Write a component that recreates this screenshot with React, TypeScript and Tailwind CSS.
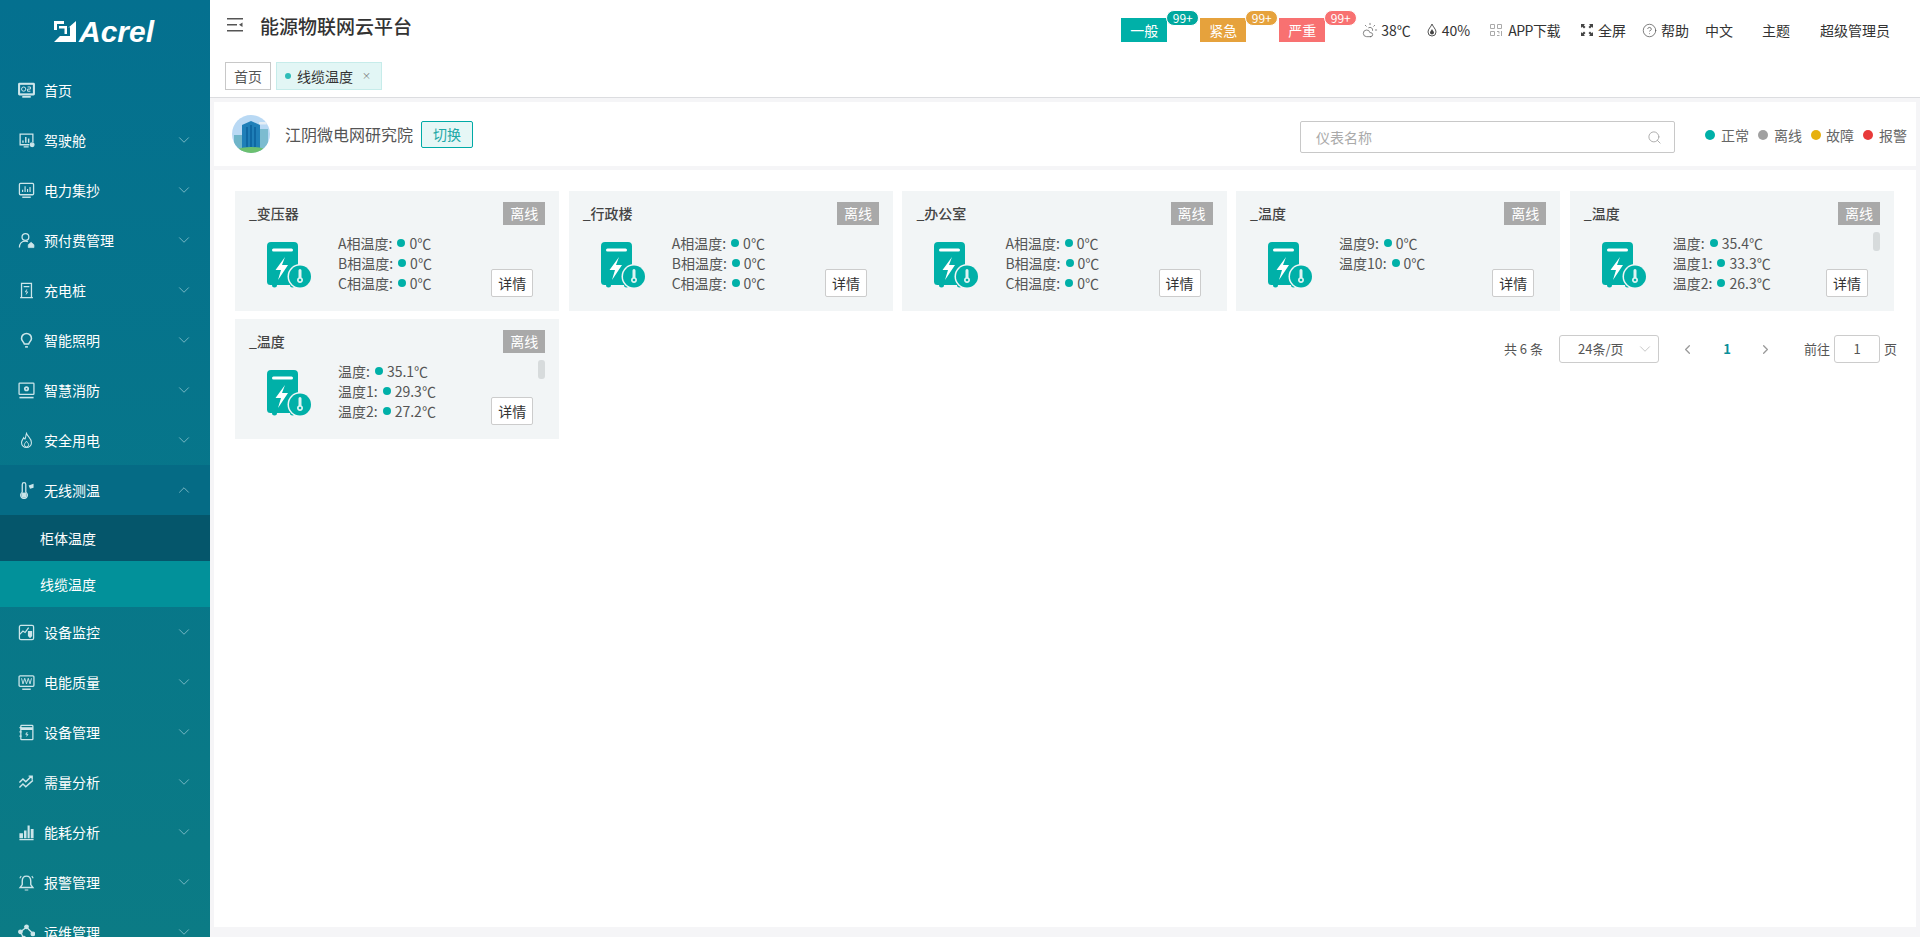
import { ChevronDown, ChevronUp, ChevronLeft, ChevronRight, Search, CircleHelp, CloudSun } from 'lucide-react';
import type { ReactNode } from 'react';

const ic = 'w-[17px] h-[17px] shrink-0 text-[#cde6ea]';

function Svg({ children }: { children: ReactNode }) {
  return (
    <svg viewBox="0 0 24 24" fill="none" stroke="currentColor" strokeWidth="1.8" className={ic}>
      {children}
    </svg>
  );
}

const icons: Record<string, ReactNode> = {
  home: (
    <Svg>
      <rect x="1" y="2" width="22" height="16" rx="1" fill="currentColor" />
      <rect x="3" y="4" width="18" height="12" fill="#04708f" stroke="none" />
      <circle cx="8" cy="10" r="3" strokeWidth="1.4" />
      <path d="M13.500 7h4v3h-4v3h4" strokeWidth="1.400" />
      <path d="M6 21h12" strokeWidth="2.400" />
    </Svg>
  ),
  cockpit: (
    <Svg>
      <path d="M16 18H3V3h18v11" />
      <path d="M7 15v-3M11 15V7M15 15V9M8 21h7" strokeWidth="2" />
      <circle cx="20" cy="18" r="2.600" fill="currentColor" />
    </Svg>
  ),
  meter: (
    <Svg>
      <rect x="2" y="2" width="20" height="16" rx="1.500" />
      <path d="M6.500 14v-3M10 14V6M13.500 14v-4M17 14V7" strokeWidth="1.600" />
      <path d="M6 21.500h12" strokeWidth="2" />
    </Svg>
  ),
  prepay: (
    <Svg>
      <circle cx="10.500" cy="7" r="4.800" />
      <path d="M2 22c0-5.500 3-9 8.500-9 1.500 0 2.500.3 3.500.8" />
      <path d="M14.500 18l4-3.500 4 3.500v4h-8Z" fill="currentColor" strokeWidth="1" />
    </Svg>
  ),
  charger: (
    <Svg>
      <path d="M5 21V2h14v19M3 22h18M8 6.500h8" />
      <path d="M12.500 10.500l-2 3.500h3l-2 3.500" strokeWidth="1.400" />
    </Svg>
  ),
  light: (
    <Svg>
      <path d="M12 2a7 7 0 0 1 7 7c0 3-3 5-4 8H9c-1-3-4-5-4-8a7 7 0 0 1 7-7Z" strokeWidth="2.200" />
      <path d="M10 21h4" strokeWidth="2.200" />
    </Svg>
  ),
  fire: (
    <Svg>
      <rect x="1.500" y="1.500" width="21" height="16" rx="1" />
      <circle cx="12" cy="9.500" r="3.600" fill="currentColor" stroke="none" />
      <circle cx="12" cy="9.500" r="1.200" fill="#04708f" stroke="none" />
      <path d="M2 22h20" strokeWidth="2.200" />
    </Svg>
  ),
  safe: (
    <Svg>
      <path d="M12 2c1 4 7 7 7 13a7 7 0 0 1-14 0c0-3 2-5 3-7 1 2 2 2 2 2 1-3 1-5 2-8Z" strokeWidth="1.500" />
      <path d="M12 13c1 2 3 3 3 5a3 3 0 0 1-6 0c0-2 2-3 3-5Z" strokeWidth="1.300" />
    </Svg>
  ),
  thermo: (
    <svg viewBox="0 0 24 24" fill="none" stroke="currentColor" strokeWidth="1.800" className={ic}>
      <path d="M6 14.500V3.500a2.500 2.500 0 0 1 5 0v11a4.700 4.700 0 1 1-5 0Z" />
      <circle cx="8.500" cy="18.500" r="2.800" fill="currentColor" />
      <path d="M15 5l7-2.500v5.500l-5 1.500Z" fill="currentColor" stroke="none" />
    </svg>
  ),
  monitor: (
    <Svg>
      <rect x="2" y="2" width="20" height="20" rx="2" />
      <path d="M2 15l5-5 3 2 5-7" />
      <path d="M14 10h6v7l-3 3-3-3Z" fill="currentColor" stroke="none" />
    </Svg>
  ),
  quality: (
    <Svg>
      <rect x="1.500" y="2.500" width="21" height="15" rx="1.500" />
      <path d="M5 6l2 8 2.500-8 2.500 8 2.500-8 2.500 8 2-8" strokeWidth="1.300" />
      <path d="M6 21.500h12" strokeWidth="2" />
    </Svg>
  ),
  device: (
    <Svg>
      <rect x="4" y="2" width="17" height="20" rx="1" />
      <path d="M4 6.500h17" strokeWidth="4" />
      <path d="M2 5h3M2 11h3M2 17h3" />
      <path d="M13 11.500l-2 3h3l-2 3" strokeWidth="1.400" />
    </Svg>
  ),
  demand: (
    <Svg>
      <path d="M2 12l5-5 4 4 8-8M15 3h5v5M2 19l5-5 4 4 10-9" strokeWidth="2" />
    </Svg>
  ),
  energy: (
    <svg viewBox="0 0 24 24" fill="currentColor" className={ic}>
      <path d="M2 21h20v2H2ZM2 13h5v7H2ZM8.500 9h3.500v11H8.500ZM13.500 2h3v18h-3ZM18 7h4v13h-4Z" />
    </svg>
  ),
  alarm: (
    <Svg>
      <path d="M12 3c-4 0-6 3-6 7v5l-3 4h18l-3-4v-5c0-4-2-7-6-7Z" strokeWidth="2" />
      <path d="M9.500 22.500h5M2.500 6l2-3M21.500 6l-2-3" strokeWidth="1.500" />
    </Svg>
  ),
  ops: (
    <Svg>
      <circle cx="3.500" cy="11" r="2.500" fill="currentColor" />
      <circle cx="12" cy="4" r="2.500" fill="currentColor" />
      <circle cx="21" cy="14" r="2.500" fill="currentColor" />
      <circle cx="8" cy="20" r="2.500" fill="currentColor" />
      <path d="M5.500 9.500l5-4M13.500 6l6 6M4.500 13l2.500 5" />
    </Svg>
  ),
};

const menuTop = [
  ['首页', 'home'],
  ['驾驶舱', 'cockpit'],
  ['电力集抄', 'meter'],
  ['预付费管理', 'prepay'],
  ['充电桩', 'charger'],
  ['智能照明', 'light'],
  ['智慧消防', 'fire'],
  ['安全用电', 'safe'],
];

const menuBottom = [
  ['设备监控', 'monitor'],
  ['电能质量', 'quality'],
  ['设备管理', 'device'],
  ['需量分析', 'demand'],
  ['能耗分析', 'energy'],
  ['报警管理', 'alarm'],
  ['运维管理', 'ops'],
];

function MenuItem({ label, icon, open, noArrow }: { label: string; icon: string; open?: boolean; noArrow?: boolean }) {
  return (
    <div className={`h-[50px] shrink-0 flex items-center pl-[18px] pr-[17px] text-[14px] text-white ${open ? 'bg-[#056b85]' : ''}`}>
      <span className="w-[26px] flex">{icons[icon]}</span>
      <span className="flex-1">{label}</span>
      {!noArrow &&
        (open ? (
          <ChevronUp className="w-[18px] h-[18px] text-[#8cc4cf]" strokeWidth={1.1} />
        ) : (
          <ChevronDown className="w-[18px] h-[18px] text-[#8cc4cf]" strokeWidth={1.1} />
        ))}
    </div>
  );
}

function Sidebar() {
  return (
    <aside className="w-[210px] h-full shrink-0 overflow-hidden flex flex-col bg-gradient-to-b from-[#04708f] to-[#0b7b85]">
      <div className="h-[65px] shrink-0 flex items-start pt-[20px] pl-[54px]">
        <svg viewBox="0 0 22 22" className="w-[22px] h-[22px]" fill="#fff">
          <path d="M0 1h10v3H3v6H0Z" />
          <path d="M5 6h8v8h-2.500V8.500H5Z" />
          <path d="M14 8 22 1v21H0l6-6h10V7Z" />
        </svg>
        <span className="ml-[3px] text-[30px] leading-[23px] font-bold italic text-white font-['Liberation_Sans',sans-serif]">Acrel</span>
      </div>
      {menuTop.map(([label, icon], i) => (
        <MenuItem key={label} label={label} icon={icon} noArrow={i === 0} />
      ))}
      <MenuItem label="无线测温" icon="thermo" open />
      <div className="h-[46px] shrink-0 bg-[#05566b] flex items-center pl-[40px] text-[14px] text-white">柜体温度</div>
      <div className="h-[46px] shrink-0 bg-[#02919a] flex items-center pl-[40px] text-[14px] text-white">线缆温度</div>
      {menuBottom.map(([label, icon]) => (
        <MenuItem key={label} label={label} icon={icon} />
      ))}
    </aside>
  );
}

function Alarm({ label, bg, badge, ml }: { label: string; bg: string; badge: string; ml: string }) {
  return (
    <div className={`relative w-[46px] h-[24px] mt-[18px] flex items-center justify-center text-[14px] text-white ${bg} ${ml}`}>
      {label}
      <span className={`absolute -top-[8px] left-[45px] w-[33px] h-[16px] rounded-[8px] border border-white flex items-center justify-center text-[12px] leading-none ${badge}`}>
        99+
      </span>
    </div>
  );
}

function Header() {
  return (
    <div className="h-[50px] shrink-0 flex items-start bg-white">
      <svg viewBox="0 0 16 14" className="w-[16px] h-[14px] ml-[17px] mt-[18px]" fill="#555">
        <path d="M0 0h16v1.500H0ZM0 6h10v1.500H0ZM0 12h16v1.500H0ZM12 6.700 15.500 4.500v4.500Z" />
      </svg>
      <h1 className="ml-[17px] mt-[12px] text-[19px] leading-[28px] font-medium text-[#333]">能源物联网云平台</h1>
      <div className="ml-auto flex items-start pr-[30px] text-[14px] text-[#333]">
        <Alarm label="一般" bg="bg-[#00b0a8]" badge="bg-[#00a89e]" ml="" />
        <Alarm label="紧急" bg="bg-[#e6a23c]" badge="bg-[#e6a23c]" ml="ml-[33px]" />
        <Alarm label="严重" bg="bg-[#f87171]" badge="bg-[#f87171]" ml="ml-[33px]" />
        <div className="ml-[37px] mt-[20px] flex items-center leading-[20px]">
          <CloudSun className="w-[16px] h-[16px] text-[#666]" strokeWidth={1.2} />
          <span className="ml-[3px]">38℃</span>
          <svg viewBox="0 0 10 14" className="ml-[16px] w-[10px] h-[14px]" fill="none" stroke="#555">
            <path d="M5 1C4 4 1 6 1 9a4 4 0 0 0 8 0C9 6 6 4 5 1Z" />
            <path d="M5 6c-.6 1.500-2 2.500-2 3.500a2 2 0 0 0 4 0C7 8.500 5.600 7.500 5 6Z" fill="#444" stroke="none" />
          </svg>
          <span className="ml-[5px]">40%</span>
          <svg viewBox="0 0 12 12" className="ml-[20px] w-[12px] h-[12px]" fill="none" stroke="#aaa">
            <path d="M.5.500h4v4h-4ZM7.500.500h4v4h-4ZM.5 7.500h4v4h-4ZM7 7.500h2v2M11.500 7v5M7 11.500h2.500" />
          </svg>
          <span className="ml-[6px] tracking-[-0.5px]">APP下载</span>
          <svg viewBox="0 0 12 12" className="ml-[21px] w-[12px] h-[12px]" fill="#444">
            <path d="M0 0h4L2.800 1.200 4.500 3 3 4.500 1.200 2.800 0 4ZM12 0v4l-1.200-1.200L9 4.500 7.500 3l1.700-1.800L8 0ZM0 12V8l1.200 1.200L3 7.500 4.500 9l-1.700 1.800L4 12ZM12 12H8l1.200-1.200L7.500 9 9 7.500l1.800 1.700L12 8Z" />
          </svg>
          <span className="ml-[5px]">全屏</span>
          <CircleHelp className="ml-[16px] w-[15px] h-[15px] text-[#555]" strokeWidth={1.2} />
          <span className="ml-[4px]">帮助</span>
          <span className="ml-[16px]">中文</span>
          <span className="ml-[29px]">主题</span>
          <span className="ml-[30px]">超级管理员</span>
        </div>
      </div>
    </div>
  );
}

function Tabs() {
  return (
    <div className="h-[48px] shrink-0 bg-white border-b border-[#dcdde0] flex items-start pt-[12px] pl-[15px] text-[14px]">
      <div className="w-[46px] h-[28px] border border-[#c8c8c8] flex items-center justify-center text-[#555]">首页</div>
      <div className="ml-[5px] w-[106px] h-[28px] bg-[#e2f6f5] border border-[#c6ecea] flex items-center pl-[8px] text-[#333]">
        <span className="w-[6px] h-[6px] rounded-full bg-[#2fbdb8]" />
        <span className="ml-[6px]">线缆温度</span>
        <span className="ml-[9px] text-[9px] text-[#777]">×</span>
      </div>
    </div>
  );
}

function Avatar() {
  return (
    <svg viewBox="0 0 38 38" className="w-[38px] h-[38px] shrink-0">
      <defs>
        <clipPath id="av">
          <circle cx="19" cy="19" r="19" />
        </clipPath>
      </defs>
      <g clipPath="url(#av)">
        <rect width="38" height="38" fill="#b9d9f4" />
        <rect x="27" y="7" width="8" height="2.500" rx="1" fill="#e6eef5" />
        <rect x="2" y="20" width="9" height="16" fill="#6fb5c9" />
        <rect x="27" y="14" width="9" height="22" fill="#7cbcd0" />
        <path d="M10 10l9-4 9 4v24H10Z" fill="#1f7fb8" />
        <path d="M14 12h2v20h-2ZM18 10h2v22h-2ZM22 12h2v20h-2Z" fill="#0f68a3" />
        <ellipse cx="19" cy="38" rx="19" ry="6" fill="#6cc070" />
      </g>
    </svg>
  );
}

function CardIcon() {
  return (
    <svg viewBox="0 0 46 46" className="w-[46px] h-[46px] shrink-0">
      <path d="M4 0h23a4 4 0 0 1 4 4v39h-3a2.500 2.500 0 0 1-5 0H10a2.500 2.500 0 0 1-5 0H3.500A3.500 3.500 0 0 1 0 39.500V4a4 4 0 0 1 4-4Z" fill="#00b0a8" />
      <rect x="5" y="6.500" width="21" height="3" rx="1.500" fill="#fff" />
      <path d="M18 15 8.500 28h5.500L11 38l10-15h-6l3-8Z" fill="#fff" />
      <circle cx="33" cy="34.500" r="12.500" fill="#f2f5f6" />
      <circle cx="33" cy="34.500" r="11" fill="#00b0a8" />
      <path d="M31.500 28.500a1.500 1.500 0 0 1 3 0v7a3 3 0 1 1-3 0Z" fill="#dff4f3" />
      <circle cx="33" cy="38" r="1.300" fill="#00b0a8" />
    </svg>
  );
}

const cards = [
  { title: '_变压器', rows: [['A相温度', '0℃'], ['B相温度', '0℃'], ['C相温度', '0℃']] },
  { title: '_行政楼', rows: [['A相温度', '0℃'], ['B相温度', '0℃'], ['C相温度', '0℃']] },
  { title: '_办公室', rows: [['A相温度', '0℃'], ['B相温度', '0℃'], ['C相温度', '0℃']] },
  { title: '_温度', rows: [['温度9', '0℃'], ['温度10', '0℃']] },
  { title: '_温度', rows: [['温度', '35.4℃'], ['温度1', '33.3℃'], ['温度2', '26.3℃']], scroll: true },
  { title: '_温度', rows: [['温度', '35.1℃'], ['温度1', '29.3℃'], ['温度2', '27.2℃']], scroll: true },
];

function Card({ title, rows, scroll }: { title: string; rows: string[][]; scroll?: boolean }) {
  return (
    <div className="relative h-[120px] bg-[#f2f5f6] pl-[14px] pr-[14px] pt-[11px]">
      <div className="flex items-center justify-between">
        <span className="text-[14px] leading-[23px] font-medium text-[#444]">{title}</span>
        <span className="w-[42px] h-[23px] bg-[#a9a9a9] text-white text-[14px] flex items-center justify-center">离线</span>
      </div>
      <div className="flex pl-[18px] mt-[17px]">
        <CardIcon />
        <div className="ml-[25px] -mt-[9px] text-[14px] leading-[20px] text-[#555]">
          {rows.map(([k, v]) => (
            <div key={k} className="flex items-center whitespace-nowrap">
              {k}:
              <span className="ml-[5px] mr-[4px] w-[8px] h-[8px] shrink-0 rounded-full bg-[#00b0a8]" />
              {v}
            </div>
          ))}
        </div>
      </div>
      {scroll && <span className="absolute right-[14px] top-[41px] w-[7px] h-[19px] rounded-[3px] bg-[#d7dbdc]" />}
      <button className="absolute right-[26px] top-[78px] w-[42px] h-[28px] bg-white border border-[#ccc] rounded-[2px] text-[14px] text-[#333]">详情</button>
    </div>
  );
}

function Pager() {
  return (
    <div className="col-span-4 flex justify-end items-start pt-[16px] -mr-[3px] text-[13px] text-[#555]">
      <span className="leading-[28px]">共 6 条</span>
      <div className="ml-[16px] w-[100px] h-[28px] border border-[#ccc] rounded-[3px] flex items-center pl-[18px] pr-[4px]">
        <span className="flex-1">24条/页</span>
        <ChevronDown className="w-[18px] h-[18px] text-[#bbb]" strokeWidth={1.1} />
      </div>
      <div className="w-[38px] ml-[10px] h-[28px] flex items-center justify-center">
        <ChevronLeft className="w-[15px] h-[15px] text-[#999]" />
      </div>
      <span className="w-[40px] text-center leading-[28px] font-bold text-[#0a8f99]">1</span>
      <div className="w-[38px] h-[28px] flex items-center justify-center">
        <ChevronRight className="w-[15px] h-[15px] text-[#999]" />
      </div>
      <span className="ml-[19px] leading-[28px]">前往</span>
      <div className="ml-[4px] w-[46px] h-[28px] border border-[#ccc] rounded-[3px] flex items-center justify-center">1</div>
      <span className="ml-[4px] leading-[28px]">页</span>
    </div>
  );
}

export default function App() {
  return (
    <div className="flex w-[1920px] h-[937px] overflow-hidden bg-[#f5f5f7] font-['Noto_Sans_CJK_SC','Noto_Sans',sans-serif]">
      <Sidebar />
      <main className="flex-1 min-w-0 flex flex-col">
        <Header />
        <Tabs />
        <div className="flex-1 flex flex-col gap-[4px] mt-[4px] mx-[4px] mb-[10px]">
          {/* toolbar */}
          <div className="h-[64px] shrink-0 bg-white flex items-center pl-[18px]">
            <Avatar />
            <span className="ml-[15px] text-[16px] text-[#555]">江阴微电网研究院</span>
            <button className="ml-[8px] w-[52px] h-[27px] border border-[#00aaa6] rounded-[2px] bg-[#e6f7f6] text-[14px] text-[#20a8a6]">切换</button>
            <div className="ml-auto mt-[6px] w-[375px] h-[32px] border border-[#c8c8c8] rounded-[2px] flex items-center pl-[15px] pr-[12px] text-[14px] text-[#aaa]">
              <span className="flex-1">仪表名称</span>
              <Search className="w-[15px] h-[15px] text-[#aaa]" strokeWidth={1.5} />
            </div>
            <div className="ml-[30px] mt-[2px] w-[211px] flex items-center text-[14px] text-[#666]">
              <span className="w-[10px] h-[10px] rounded-full bg-[#00b0a8]" />
              <span className="ml-[6px]">正常</span>
              <span className="ml-[9px] w-[10px] h-[10px] rounded-full bg-[#a0a0a0]" />
              <span className="ml-[6px]">离线</span>
              <span className="ml-[9px] w-[10px] h-[10px] rounded-full bg-[#e6b00f]" />
              <span className="ml-[5px]">故障</span>
              <span className="ml-[9px] w-[10px] h-[10px] rounded-full bg-[#e83a3a]" />
              <span className="ml-[6px]">报警</span>
            </div>
          </div>
          {/* cards */}
          <div className="flex-1 bg-white pl-[21px] pr-[22px] pt-[21px]">
            <div className="grid grid-cols-5 gap-x-[9.5px] gap-y-[8px]">
              {cards.map((c, i) => (
                <Card key={i} title={c.title} rows={c.rows} scroll={c.scroll} />
              ))}
              <Pager />
            </div>
          </div>
        </div>
      </main>
    </div>
  );
}
